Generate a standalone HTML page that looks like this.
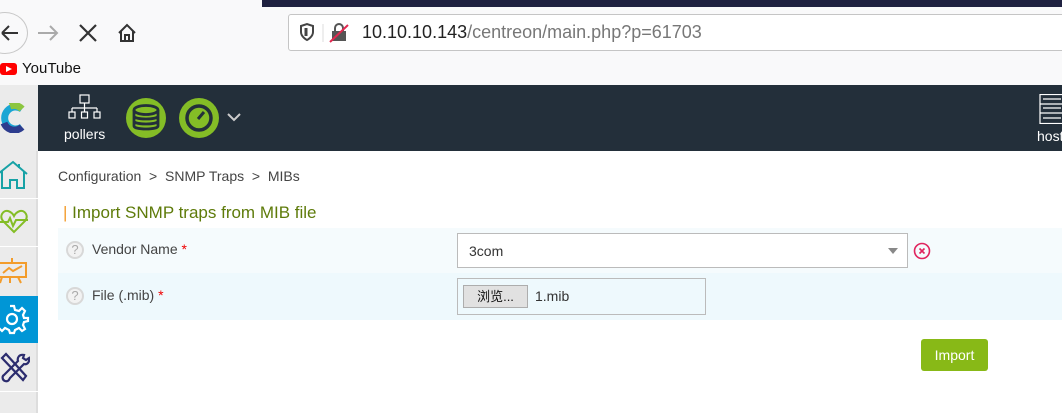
<!DOCTYPE html>
<html><head><meta charset="utf-8"><style>
*{margin:0;padding:0;box-sizing:border-box}
body{width:1062px;height:413px;overflow:hidden;background:#fff;font-family:"Liberation Sans",Arial,sans-serif;position:relative}
.abs{position:absolute}
</style></head><body>
<div class="abs" style="left:0;top:0;width:1062px;height:85px;background:#f9f9fa"></div>
<div class="abs" style="left:262px;top:0;width:800px;height:7px;background:#1f2140"></div>
<div class="abs" style="left:-18px;top:12px;width:46px;height:42px;border-radius:50%;border:1px solid #c8c8c8;background:#f9f9fa"></div>
<svg class="abs" style="left:0;top:20px" width="150" height="26">
<path d="M2 13H18M2 13L9 6M2 13L9 20" stroke="#333" stroke-width="2" fill="none"/>
<path d="M38 13H57M50 6L57 13L50 20" stroke="#aaa" stroke-width="2" fill="none"/>
<path d="M80 5L96 21M96 5L80 21" stroke="#333" stroke-width="2.2" fill="none"/>
<path d="M119 13L127 5L135 13M121 11V21H133V11M125 21V15H129V21" stroke="#333" stroke-width="2" fill="none"/>
</svg>
<div class="abs" style="left:288px;top:14px;width:790px;height:37px;background:#fff;border:1px solid #c5c5c5;border-radius:3px"></div>
<svg class="abs" style="left:296px;top:22px" width="60" height="22">
<path d="M5 4L11 2L17 4V10C17 15 11 18 11 18C11 18 5 15 5 10Z" stroke="#444" stroke-width="2" fill="none"/>
<path d="M10 6V14" stroke="#444" stroke-width="3"/>
<line x1="27" y1="2" x2="27" y2="20" stroke="#ddd"/>
<rect x="36" y="9" width="14" height="10" fill="#555"/>
<path d="M39 9V6a4 4 0 0 1 8 0V9" stroke="#555" stroke-width="2" fill="none"/>
<path d="M34 20L52 3" stroke="#e22850" stroke-width="2"/>
</svg>
<div class="abs" style="left:362px;top:22px;font-size:18px;color:#222">10.10.10.143<span style="color:#777">/centreon/main.php?p=61703</span></div>
<svg class="abs" style="left:0;top:62px" width="18" height="14"><rect x="0" y="1" width="17" height="12" rx="3" fill="#f00"/><path d="M6 4L12 7L6 10Z" fill="#fff"/></svg>
<div class="abs" style="left:22px;top:60px;font-size:15px;color:#111">YouTube</div>
<div class="abs" style="left:0;top:85px;width:1062px;height:66px;background:#232f3a"></div>
<div class="abs" style="left:0;top:85px;width:38px;height:66px;background:#ebebeb"></div>
<svg class="abs" style="left:0;top:103px" width="28" height="30"><path d="M22 6A11 11 0 1 0 22 24" stroke="#1aa6d4" stroke-width="7" fill="none"/><path d="M10 3A11 11 0 0 1 22 6" stroke="#8cc63f" stroke-width="7" fill="none"/><path d="M4 20A11 11 0 0 0 22 24" stroke="#2d3c8e" stroke-width="7" fill="none"/></svg>
<svg class="abs" style="left:68px;top:93px" width="34" height="32" fill="none" stroke="#fff" stroke-width="1.2"><rect x="12" y="2" width="9" height="8"/><path d="M16.5 10V15M4 15H29M4 15V19M16.5 15V19M29 15V19"/><rect x="1" y="19" width="6" height="6"/><rect x="13.5" y="19" width="6" height="6"/><rect x="26" y="19" width="6" height="6"/></svg>
<div class="abs" style="left:64px;top:126px;font-size:14px;color:#fff">pollers</div>
<svg class="abs" style="left:125px;top:98px" width="42" height="42"><circle cx="21" cy="20" r="20" fill="#84bd26"/><g fill="none" stroke="#232f3a" stroke-width="2.8"><ellipse cx="21" cy="12" rx="12" ry="4.5"/><path d="M9 12V28C9 32 33 32 33 28V12M9 18C9 22 33 22 33 18M9 23C9 27 33 27 33 23"/></g></svg>
<svg class="abs" style="left:178px;top:98px" width="42" height="42"><circle cx="21" cy="20" r="20" fill="#84bd26"/><circle cx="21" cy="20" r="12" fill="none" stroke="#232f3a" stroke-width="3.5"/><path d="M20 21L26 14" stroke="#232f3a" stroke-width="3"/></svg>
<svg class="abs" style="left:226px;top:112px" width="16" height="10"><path d="M2 2L8 8L14 2" stroke="#ccc" stroke-width="2" fill="none"/></svg>
<svg class="abs" style="left:1039px;top:94px" width="23" height="30" fill="none" stroke="#fff" stroke-width="1.2"><rect x="1" y="0.5" width="24" height="29"/><path d="M4 5H22M4 14H22M4 24H22M1 10H25M1 19H25"/></svg>
<div class="abs" style="left:1037px;top:128px;font-size:14px;color:#fff">host</div>
<div class="abs" style="left:0;top:151px;width:38px;height:262px;background:#ebebeb;border-right:2px solid #ddd"></div>
<div class="abs" style="left:0;top:198px;width:38px;height:1px;background:#fff"></div>
<div class="abs" style="left:0;top:246px;width:38px;height:1px;background:#fff"></div>
<div class="abs" style="left:0;top:391px;width:38px;height:1px;background:#fff"></div>
<div class="abs" style="left:0;top:296px;width:38px;height:47px;background:#0096d6"></div>
<svg class="abs" style="left:0;top:160px" width="28" height="30" fill="none" stroke="#17a2a6" stroke-width="2"><path d="M-2 14L13 2L27 14M2 11V28H10V20H17V28H24V11M19 4V8"/></svg>
<svg class="abs" style="left:0;top:208px" width="30" height="28" fill="none" stroke="#84bd26" stroke-width="2"><path d="M14 24L3 13C-1 8 3 2 8 3C11 4 13 6 14 8C15 6 17 4 20 3C25 2 29 8 25 13Z"/><path d="M0 14H8L10 10L13 18L16 12H28"/></svg>
<svg class="abs" style="left:0;top:256px" width="28" height="32" fill="none" stroke="#f39c2b" stroke-width="2"><path d="M12 2V6M0 7H26V21H0M2 21L0 27M10 21V27M18 21L21 27"/><path d="M3 17L9 12L13 15L22 10"/></svg>
<svg class="abs" style="left:0;top:303px" width="30" height="32" fill="none" stroke="#fff" stroke-width="2.2"><circle cx="12" cy="16" r="5"/><path d="M10 3H14L15 7L19 8L22 5L25 8L23 12L24 15H28V18L24 19L23 22L25 26L22 28L19 25L15 27L14 30H10L9 27L5 25L2 28L-1 25"/></svg>
<svg class="abs" style="left:0;top:352px" width="30" height="32" fill="none" stroke="#2b2c6e" stroke-width="2.2"><path d="M2 6L6 2L26 24L23 28Z"/><path d="M24 3C19 2 17 6 18 9L4 23C2 24 2 28 5 29C8 30 9 28 10 26L24 12C27 13 30 10 29 6L26 8L23 6Z"/></svg>
<div class="abs" style="left:58px;top:168px;font-size:14px;color:#444">Configuration &nbsp;&gt;&nbsp; SNMP Traps &nbsp;&gt;&nbsp; MIBs</div>
<div class="abs" style="left:63px;top:203px;font-size:17px;color:#5e7b0a"><span style="color:#f39c2b">|</span> Import SNMP traps from MIB file</div>
<div class="abs" style="left:58px;top:228px;width:1004px;height:45px;background:#f5fbfd"></div>
<div class="abs" style="left:58px;top:273px;width:1004px;height:47px;background:#eef9fd"></div>
<div class="abs" style="left:66px;top:241px;width:18px;height:18px;border-radius:50%;border:2px solid #d8d8d8;background:#f2f2f2;color:#aaa;font-size:13px;text-align:center;line-height:14px">?</div>
<div class="abs" style="left:66px;top:287px;width:18px;height:18px;border-radius:50%;border:2px solid #d8d8d8;background:#f2f2f2;color:#aaa;font-size:13px;text-align:center;line-height:14px">?</div>
<div class="abs" style="left:92px;top:241px;font-size:14px;color:#444">Vendor Name <span style="color:#e00">*</span></div>
<div class="abs" style="left:92px;top:287px;font-size:14px;color:#444">File (.mib) <span style="color:#e00">*</span></div>
<div class="abs" style="left:457px;top:233px;width:451px;height:35px;background:#fff;border:1px solid #bbb"></div>
<div class="abs" style="left:469px;top:243px;font-size:14px;color:#333">3com</div>
<div class="abs" style="left:888px;top:248px;width:0;height:0;border-left:5px solid transparent;border-right:5px solid transparent;border-top:6px solid #888"></div>
<svg class="abs" style="left:913px;top:242px" width="18" height="18"><circle cx="9" cy="9" r="7.5" fill="none" stroke="#e0245e" stroke-width="1.6"/><path d="M6.5 6.5L11.5 11.5M11.5 6.5L6.5 11.5" stroke="#e0245e" stroke-width="1.6"/></svg>
<div class="abs" style="left:457px;top:278px;width:249px;height:37px;border:1px solid #bbb"></div>
<div class="abs" style="left:463px;top:285px;width:65px;height:23px;background:#e1e1e1;border:1px solid #adadad;font-family:'Liberation Sans','Noto Sans CJK SC',sans-serif;font-size:13px;color:#111;text-align:center;line-height:21px">浏览...</div>
<div class="abs" style="left:535px;top:288px;font-size:14px;color:#333">1.mib</div>
<div class="abs" style="left:921px;top:339px;width:67px;height:32px;background:#88b917;border-radius:3px;color:#fff;font-size:14px;text-align:center;line-height:32px">Import</div>
</body></html>
